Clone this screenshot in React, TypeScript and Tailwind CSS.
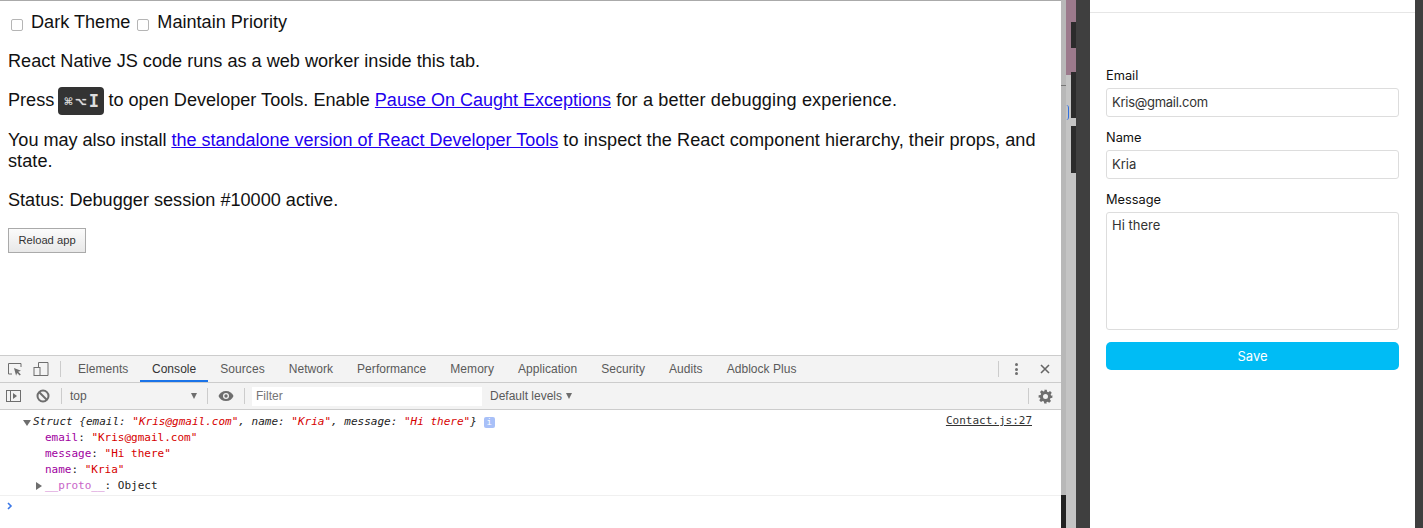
const sans = 'font-["Liberation_Sans",Arial,sans-serif]';

const tabs = ['Elements', 'Console', 'Sources', 'Network', 'Performance', 'Memory', 'Application', 'Security', 'Audits', 'Adblock Plus'];

function Divider() {
  return <div className="h-4 w-px shrink-0 bg-[#ccc]" />;
}

function DevTools() {
  return (
    <div className="flex h-[173px] shrink-0 flex-col border-t border-[#ccc] bg-white">
      {/* Tab strip */}
      <div className="flex h-[27px] shrink-0 items-center border-b border-[#ccc] bg-[#f3f3f3] text-xs tracking-[0.05px] text-[#5a5a5a]">
        <div className="flex w-[60px] shrink-0 items-center pl-[7px]">
          <svg width="16" height="16" viewBox="0 0 16 16" fill="none">
            <path d="M5 13H1.500V2.500H14V6" stroke="#6e6e6e" strokeWidth="1" />
            <path d="M7 7l7 2.800-2.800 1 2.600 2.600-1.100 1.100-2.600-2.600-1 2.800z" fill="#6e6e6e" />
          </svg>
          <svg className="ml-[10px]" width="16" height="16" viewBox="0 0 16 16" fill="none">
            <path d="M5.500 6V1.500H15V14.500H7" stroke="#6e6e6e" />
            <rect x="1" y="6.500" width="6" height="8" stroke="#6e6e6e" />
          </svg>
        </div>
        <Divider />
        <div className="ml-[5px] flex h-full">
          {tabs.map((t, i) => (
            <div
              key={t}
              className={
                t === 'Console'
                  ? 'flex h-full items-center border-b-2 border-[#1a73e8] px-3 pt-[1px] text-[#333]'
                  : i === 0
                    ? 'flex h-full items-center pb-[1px] pl-3 pr-[11.5px]'
                    : 'flex h-full items-center px-3 pb-[1px]'
              }
            >
              {t}
            </div>
          ))}
        </div>
        <div className="ml-auto flex items-center">
          <Divider />
          <div className="ml-[16px] flex h-3 w-[3px] flex-col justify-between">
            <span className="h-[3px] w-[3px] rounded-full bg-[#6e6e6e]" />
            <span className="h-[3px] w-[3px] rounded-full bg-[#6e6e6e]" />
            <span className="h-[3px] w-[3px] rounded-full bg-[#6e6e6e]" />
          </div>
          <svg className="ml-[22px] mr-[11px]" width="10" height="10" viewBox="0 0 10 10">
            <path d="M1 1l8 8M9 1l-8 8" stroke="#666" strokeWidth="1.600" />
          </svg>
        </div>
      </div>

      {/* Console toolbar */}
      <div className="flex h-[27px] shrink-0 items-center border-b border-[#ccc] bg-[#f3f3f3] text-xs text-[#5a5a5a]">
        <svg className="ml-[6px] shrink-0" width="15" height="13" viewBox="0 0 15 13" fill="none">
          <rect x="0.500" y="0.500" width="14" height="11" stroke="#6e6e6e" />
          <path d="M4.500 0.500V11.500" stroke="#6e6e6e" />
          <path d="M7 3l4 3-4 3z" fill="#6e6e6e" />
        </svg>
        <svg className="ml-[15px] shrink-0" width="14" height="14" viewBox="0 0 14 14" fill="none">
          <circle cx="7" cy="7" r="5.500" stroke="#6e6e6e" strokeWidth="2" />
          <path d="M3 3l8 8" stroke="#6e6e6e" strokeWidth="2" />
        </svg>
        <div className="ml-[11px] shrink-0"><Divider /></div>
        <span className="ml-[8px] w-[121px] shrink-0 pb-[1px]">top</span>
        <span className="h-0 w-0 shrink-0 border-x-[3.5px] border-t-[6px] border-x-transparent border-t-[#6e6e6e]" />
        <div className="ml-[10px] shrink-0"><Divider /></div>
        <svg className="ml-[10px] shrink-0" width="16" height="12" viewBox="0 0 16 12">
          <path d="M8 1C4.500 1 1.600 3 0.500 6c1.100 3 4 5 7.500 5s6.400-2 7.500-5C14.400 3 11.500 1 8 1z" fill="#6e6e6e" />
          <circle cx="8" cy="6" r="3" fill="#f3f3f3" />
          <circle cx="8" cy="6" r="1.700" fill="#6e6e6e" />
        </svg>
        <div className="ml-[10px] shrink-0"><Divider /></div>
        <input
          className="ml-[7px] h-[19px] w-[230px] shrink-0 bg-white pl-1 text-xs outline-none placeholder:text-[#757575]"
          placeholder="Filter"
        />
        <span className="ml-[8px] pb-[1px]">Default levels</span>
        <span className="ml-[4px] h-0 w-0 border-x-[3.5px] border-t-[6px] border-x-transparent border-t-[#6e6e6e]" />
        <div className="ml-auto flex items-center">
          <Divider />
          <svg className="ml-[9px] mr-[8px]" width="15" height="15" viewBox="0 0 24 24">
            <path
              fill="#6e6e6e"
              fillRule="evenodd"
              d="M10 1h4l.6 3.200 1.900.8 2.700-1.800 2.800 2.800-1.800 2.700.8 1.900L23 10v4l-3.200.6-.8 1.900 1.800 2.700-2.800 2.800-2.700-1.800-1.900.8L14 23h-4l-.6-3.200-1.900-.8-2.700 1.800-2.800-2.800 1.800-2.700-.8-1.900L1 14v-4l3.200-.6.8-1.900-1.800-2.700 2.800-2.800 2.700 1.800 1.900-.8zM12 8a4 4 0 100 8 4 4 0 000-8z"
            />
          </svg>
        </div>
      </div>

      {/* Console output */}
      <div className='relative flex-1 font-["DejaVu_Sans_Mono",monospace] text-[11px] leading-4 text-[#222]'>
        <div className="border-b border-[#f0f0f0] pb-[1px] pl-[23px] pt-[4px]">
          <div className="flex items-center whitespace-pre">
            <span className="mr-[2px] mt-[1px] h-0 w-0 border-x-[4px] border-t-[6px] border-x-transparent border-t-[#6e6e6e]" />
            <span className="italic">
              Struct {'{'}email: <span className="text-[#d60000]">"Kris@gmail.com"</span>, name:{' '}
              <span className="text-[#d60000]">"Kria"</span>, message:{' '}
              <span className="text-[#d60000]">"Hi there"</span>
              {'}'}
            </span>
            <span className="ml-[7px] flex h-[11px] w-[11px] items-center justify-center rounded-[2px] bg-[#a8c0f8] text-[9px] text-white">
              i
            </span>
          </div>
          <div className="whitespace-pre pl-[22px]">
            <div>
              <span className="text-[#a000a0]">email</span>: <span className="text-[#d60000]">"Kris@gmail.com"</span>
            </div>
            <div>
              <span className="text-[#a000a0]">message</span>: <span className="text-[#d60000]">"Hi there"</span>
            </div>
            <div>
              <span className="text-[#a000a0]">name</span>: <span className="text-[#d60000]">"Kria"</span>
            </div>
            <div className="relative">
              <span className="absolute -left-[9px] top-[4px] h-0 w-0 border-y-[4px] border-l-[6px] border-y-transparent border-l-[#6e6e6e]" />
              <span className="text-[#c864c8]">__proto__</span>: Object
            </div>
          </div>
        </div>
        <span className="absolute right-[29px] top-[3px] text-[#333] underline">Contact.js:27</span>
        <svg className="ml-[7px] mt-[6px]" width="6" height="8" viewBox="0 0 6 8" fill="none">
          <path d="M1 1l3 3-3 3" stroke="#3b78e7" strokeWidth="1.600" />
        </svg>
      </div>
    </div>
  );
}

function DebuggerPage() {
  return (
    <div className={`flex w-[1061px] shrink-0 flex-col border-t-[1px] border-[#aaa] bg-white ${sans}`}>
      <div className="flex-1 px-2 text-[18.12px] leading-[21px] text-[#111]">
        <div className="flex items-center pt-[11px]">
          <input type="checkbox" className="ml-[3px] mr-[8px] mt-[4px] h-3 w-3 appearance-none rounded-[2px] border border-[#b5b5b5] bg-white" />
          <span>Dark Theme</span>
          <input type="checkbox" className="ml-[7px] mr-[8px] mt-[4px] h-3 w-3 appearance-none rounded-[2px] border border-[#b5b5b5] bg-white" />
          <span>Maintain Priority</span>
        </div>
        <p className="mt-[18px]">React Native JS code runs as a web worker inside this tab.</p>
        <p className="mt-[18px]">
          Press{' '}
          <kbd className='-mx-[1px] -my-[4px] inline-flex h-[28px] w-[46px] items-center justify-center gap-[2px] rounded-[4px] bg-[#333] align-middle font-["DejaVu_Sans",sans-serif] text-xs font-bold text-[#ddd]'>
            <span className="text-[10px]">⌘</span>
            <span className="text-[10px] [text-shadow:0_0_1px_#ddd]">⌥</span>
            <span className='font-["DejaVu_Sans_Mono",monospace] text-[17px] font-bold'>I</span>
          </kbd>{' '}
          to open Developer Tools. Enable <a className="text-[18px] text-[#2200ee] underline">Pause On Caught Exceptions</a>
          <span className="tracking-[0.15px]"> for a better debugging experience.</span>
        </p>
        <p className="mt-[19px] tracking-[0.06px]">
          <span className="tracking-[-0.05px]">You may also install </span>
          <a className="text-[18px] tracking-normal text-[#2200ee] underline">the standalone version of React Developer Tools</a> to inspect the React component hierarchy, their props, and
          <br />
          state.
        </p>
        <p className="mt-[18px]">Status: Debugger session #10000 active.</p>
        <button className="mt-[17px] block h-[25px] w-[78px] border border-[#aaa] bg-gradient-to-b from-[#fbfbfb] to-[#e8e8e8] text-[11.2px] leading-none text-[#333]">
          Reload app
        </button>
      </div>
      <DevTools />
    </div>
  );
}

// sliver of the window behind the simulator
function BackdropSliver() {
  return (
    <div className="relative w-[15px] shrink-0 bg-[#c4c4c4]">
      <div className="h-[75px] bg-[#9c7a8c]" />
      <div className="absolute left-0 top-0 h-full w-[5px] bg-[#b8b8b8]" />
      <div className="absolute left-0 top-[85px] h-px w-[5px] bg-[#777]" />
      <div className="absolute left-[5px] top-[105px] h-[15px] w-[3px] rounded-r-full border-r border-[#2f6fe0]" />
      <div className="absolute bottom-0 left-0 h-[33px] w-[5px] bg-[#222]" />
      <div className="absolute left-[10px] top-[22px] h-[26px] w-[5px] bg-[#2b2b2b]" />
      <div className="absolute left-[10px] top-[72px] h-[46px] w-[5px] bg-[#2b2b2b]" />
      <div className="absolute left-[10px] top-[126px] h-[47px] w-[5px] bg-[#2b2b2b]" />
    </div>
  );
}

function Field({ label, value, inputClass = '' }: { label: string; value: string; inputClass?: string }) {
  return (
    <div className="mb-3">
      <label className="block text-[12.8px] leading-[18px] text-[#111]">{label}</label>
      <input
        readOnly
        defaultValue={value}
        className={`mt-[3px] block h-[29px] w-full rounded-[3px] border border-[#ddd] bg-white px-[5px] pb-[2px] text-[13px] text-[#333] outline-none ${inputClass}`}
      />
    </div>
  );
}

function Phone() {
  return (
    <div className='flex min-w-0 flex-1 bg-[#3f3f3f] pl-[14px] pr-[8px] font-["Inter",sans-serif]'>
      <div className="w-[325px] shrink-0 bg-white">
        <div className="h-[13px] border-b border-[#e6e6e6]" />
        <div className="px-4 pt-[54px]">
          <Field label="Email" value="Kris@gmail.com" inputClass="tracking-[-0.28px]" />
          <Field label="Name" value="Kria" />
          <label className="block text-[12.8px] leading-[18px] text-[#111]">Message</label>
          <textarea
            readOnly
            defaultValue="Hi there"
            className="mt-[3px] block h-[118px] w-full resize-none rounded-[3px] border border-[#ddd] bg-white px-[5px] py-[4px] text-[13px] leading-4 text-[#333] outline-none"
          />
          <button className="mt-3 block h-[28px] w-full rounded-[5px] bg-[#00bcf5] pt-[2px] text-[13px] text-white">Save</button>
        </div>
      </div>
    </div>
  );
}

export default function App() {
  return (
    <div className="flex h-[528px] w-[1423px] overflow-hidden bg-[#3f3f3f]">
      <DebuggerPage />
      <BackdropSliver />
      <Phone />
    </div>
  );
}
